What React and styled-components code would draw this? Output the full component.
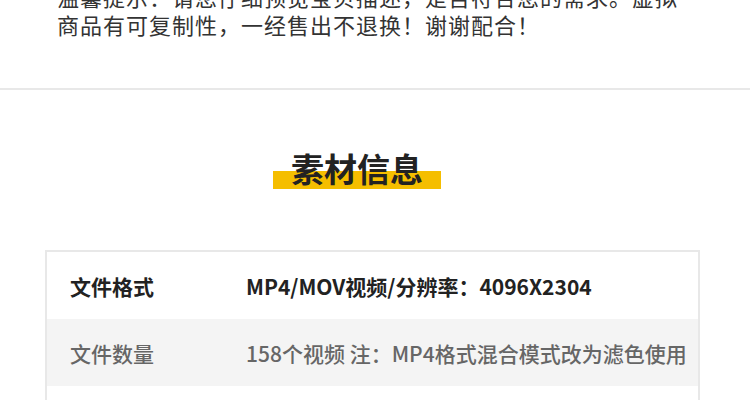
import React from "react";
import styled, { createGlobalStyle } from "styled-components";

const Global = createGlobalStyle`
  html, body { margin: 0; padding: 0; background: #fff; overflow: hidden; }
  body { font-family: "Noto Sans CJK SC", "Noto Sans", sans-serif; }
`;

const Page = styled.div`
  width: 750px;
  height: 400px;
  overflow: hidden;
  display: flex;
  flex-direction: column;
`;

const Notice = styled.div`
  margin: -18px 0 0 57px;
  font-size: 22px;
  line-height: 28px;
  color: #333;
`;

const NoticeLine = styled.div`
  width: ${(p) => (p.$full ? "620px" : "auto")};
  letter-spacing: ${(p) => (p.$full ? "0" : "1px")};
  text-align: ${(p) => (p.$full ? "justify" : "left")};
  text-align-last: ${(p) => (p.$full ? "justify" : "auto")};
  white-space: nowrap;
`;

const Divider = styled.div`
  margin-top: 50px;
  height: 2px;
  background: #e8e8e8;
  flex-shrink: 0;
`;

const TitleWrap = styled.div`
  margin-top: 56px;
  display: flex;
  justify-content: center;
  padding-right: 36px;
`;

const Title = styled.h2`
  margin: 0;
  padding: 0 18px;
  font-size: 33px;
  font-weight: 700;
  line-height: 44px;
  color: #222;
  background: linear-gradient(
    to bottom,
    transparent 0,
    transparent 25px,
    #f5be00 25px,
    #f5be00 43px,
    transparent 43px
  );
`;

const Table = styled.div`
  margin: 60px 50px 0 45px;
  border: 2px solid #e8e8e8;
  flex-shrink: 0;
`;

const Row = styled.div`
  display: grid;
  grid-template-columns: 176px 1fr;
  align-items: center;
  height: 67px;
  padding-left: 23px;
  background: ${(p) => (p.$shade ? "#f4f4f4" : "#fff")};
  color: ${(p) => (p.$shade ? "#666" : "#222")};
  font-size: 21px;
  font-weight: ${(p) => (p.$shade ? 500 : 700)};
  white-space: nowrap;
`;

const Cell = styled.span``;

const rows = [
  ["文件格式", "MP4/MOV视频/分辨率：4096X2304"],
  ["文件数量", "158个视频 注：MP4格式混合模式改为滤色使用"],
  ["", ""],
];

export default function App() {
  return (
    <Page>
      <Global />
      <Notice>
        <NoticeLine $full>温馨提示：请您仔细预览宝贝描述，是否符合您的需求。虚拟</NoticeLine>
        <NoticeLine>商品有可复制性，一经售出不退换！谢谢配合！</NoticeLine>
      </Notice>
      <Divider />
      <TitleWrap>
        <Title>素材信息</Title>
      </TitleWrap>
      <Table>
        {rows.map(([k, v], i) => (
          <Row key={i} $shade={i % 2 === 1}>
            <Cell>{k}</Cell>
            <Cell>{v}</Cell>
          </Row>
        ))}
      </Table>
    </Page>
  );
}
